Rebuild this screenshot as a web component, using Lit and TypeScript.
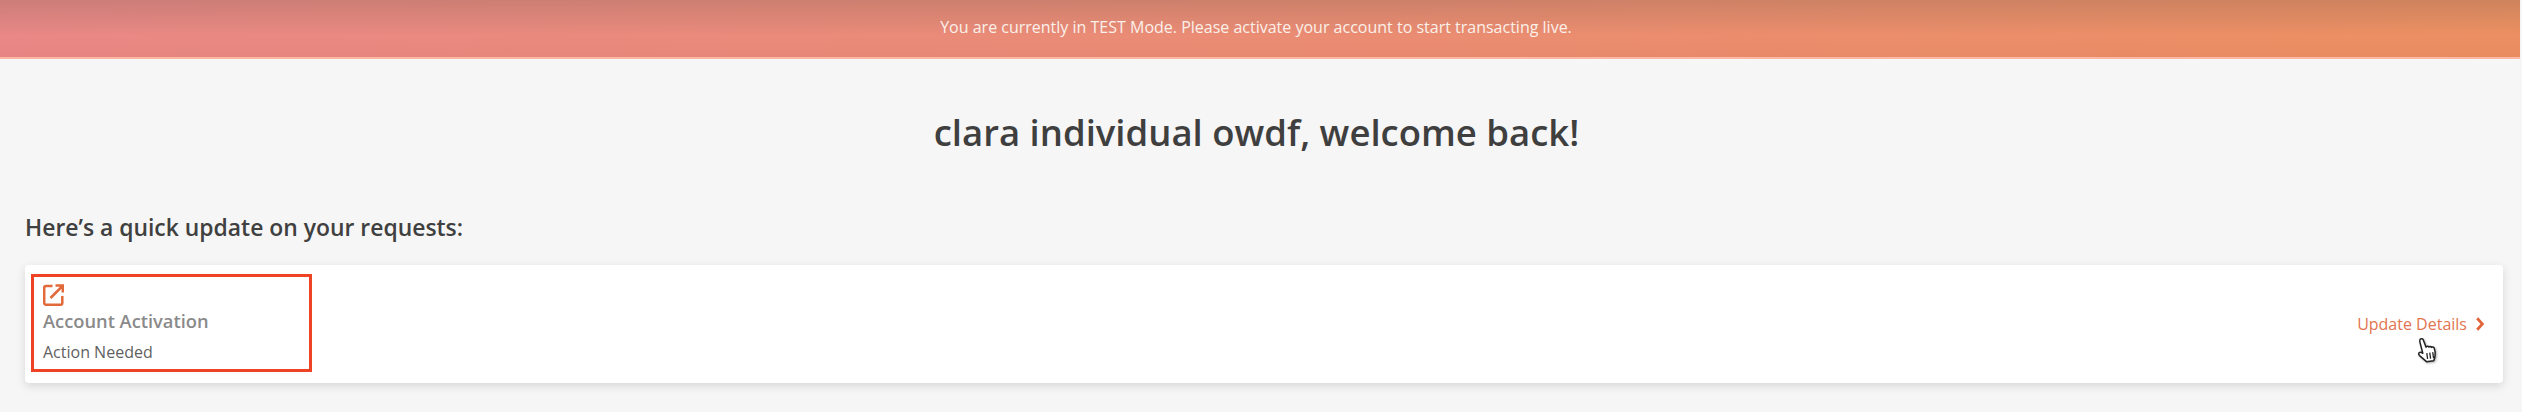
import { LitElement, html, css } from "lit";
import { customElement } from "lit/decorators.js";

@customElement("app-root")
export class AppRoot extends LitElement {
  static styles = css`
    :host {
      display: block;
      width: 2522px;
      height: 412px;
      overflow: hidden;
      background: #f6f6f7;
      font-family: "Open Sans", "Noto Sans", sans-serif;
      box-sizing: border-box;
      position: relative;
    }
    .banner {
      margin-right: 2px;
      padding-right: 8px;
      padding-bottom: 3px;
      box-sizing: content-box;
      height: 54px;
      border-bottom: 2px solid #fbb9a4;
      display: flex;
      align-items: center;
      justify-content: center;
      color: #fbf0ea;
      font-size: 16px;
      background:
        linear-gradient(180deg, rgba(90, 80, 70, 0.2) 0%, rgba(90, 80, 70, 0) 62%, rgba(120, 40, 20, 0.03) 100%),
        linear-gradient(90deg, #e98886 0%, #ec9062 100%);
    }
    h1 {
      margin: 0;
      padding-top: 49px;
      padding-right: 9px;
      text-align: center;
      font-size: 36.5px;
      line-height: 49px;
      font-weight: 600;
      color: #3f3f3f;
    }
    h2 {
      margin: 0;
      padding: 56px 0 0 25px;
      font-size: 22.9px;
      line-height: 30px;
      font-weight: 600;
      color: #404040;
    }
    .card {
      margin: 22px 19px 0 25px;
      height: 118px;
      box-sizing: border-box;
      background: #fff;
      border-radius: 4px;
      box-shadow: 0 3px 10px rgba(0, 0, 0, 0.13);
      display: flex;
      align-items: stretch;
      justify-content: space-between;
      padding: 9px 19px 11px 6px;
    }
    .box {
      width: 281px;
      box-sizing: border-box;
      border: 3px solid #ee4324;
      padding: 7px 0 0 9px;
      display: flex;
      flex-direction: column;
    }
    .box svg { display: block; }
    .title {
      margin-top: 2px;
      font-size: 18.3px;
      line-height: 26px;
      font-weight: 600;
      color: #8a8a8a;
    }
    .status {
      margin-top: 7px;
      font-size: 16px;
      line-height: 22px;
      color: #5f5f5f;
    }
    .action {
      display: flex;
      align-items: center;
      gap: 9px;
      align-self: center;
      color: #e2744f;
      font-size: 16px;
      position: relative;
      top: 1px;
    }
    .cursor {
      position: absolute;
      left: 2413px;
      top: 335px;
      filter: drop-shadow(1px 1px 1px rgba(0, 0, 0, 0.3));
    }
  `;

  render() {
    return html`
      <div class="banner"><span>You are currently in TEST Mode. Please activate your account to start transacting live.</span></div>
      <h1>clara individual owdf, welcome back!</h1>
      <h2>Here’s a quick update on your requests:</h2>
      <div class="card">
        <div class="box">
          <svg width="21" height="22" viewBox="0 0 21 22" fill="none" stroke="#e2693a" stroke-width="2.5">
            <path d="M9.500 2H3a1.800 1.800 0 0 0-1.800 1.800v15A1.800 1.800 0 0 0 3 20.700h14.500a1.800 1.800 0 0 0 1.800-1.800V12" />
            <path d="M7.500 14 19.500 2M12.500 1.400h7.300V8.500" />
          </svg>
          <div class="title">Account Activation</div>
          <div class="status">Action Needed</div>
        </div>
        <div class="action">
          <span>Update Details</span>
          <svg width="8" height="14" viewBox="0 0 8 14" fill="none" stroke="#e0663a" stroke-width="2.800">
            <path d="M1.200 1.200 6.400 7l-5.200 5.800" />
          </svg>
        </div>
      </div>
      <svg class="cursor" width="28" height="30" viewBox="-2 -2 28 30">
        <g transform="rotate(-8 12 14)">
          <path d="M6.800 1.500c1.200-1 2.800-.3 3.100 1L11.500 10l1-.6c1-.3 1.700.2 2 1 .8-.6 2-.4 2.400.6.900-.5 2.300-.2 2.600 1 .5 2 .6 5-.2 8-.5 1.800-1 3-2 4.500H10l-6-7c-1-1.400-.8-2.500.2-3 1-.6 2.300.2 3.300 1.200L6.300 5C6.100 3.500 6.100 2.200 6.800 1.500Z" fill="#fff" stroke="#222" stroke-width="1.500" stroke-linejoin="round"/>
          <path d="M11.500 16v6M14.500 16v6M17.500 16v6" stroke="#222" stroke-width="1.300"/>
        </g>
      </svg>
    `;
  }
}
